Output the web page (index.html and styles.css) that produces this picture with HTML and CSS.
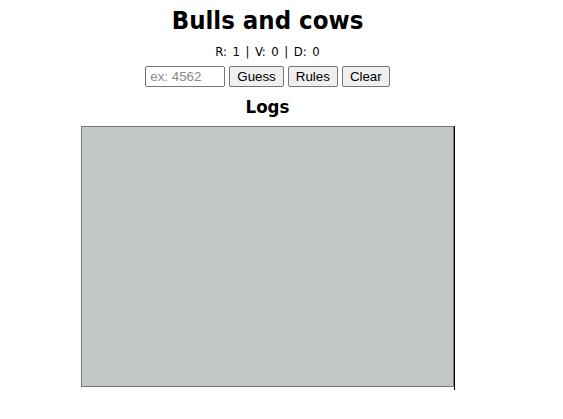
FILE: index.html
```html
<!DOCTYPE html>
<html>
<head>
<meta charset="utf-8">
<link rel="stylesheet" href="styles.css">
</head>
<body>
<main class="page">
  <h1 class="title">Bulls and cows</h1>
  <p class="stats">R: 1 | V: 0 | D: 0</p>
  <div class="controls">
    <input class="guess-input" type="text" placeholder="ex: 4562">
    <button class="btn">Guess</button>
    <button class="btn">Rules</button>
    <button class="btn">Clear</button>
  </div>
  <h2 class="logs-title">Logs</h2>
  <div class="logs-row">
    <div class="logs"></div>
    <div class="logs-edge"></div>
  </div>
</main>
</body>
</html>
```
FILE: styles.css
```css
body {
  margin: 0;
  background: #fff;
  font-family: "DejaVu Sans Condensed", "DejaVu Sans", sans-serif;
}
.page {
  width: 535px;
  display: flex;
  flex-direction: column;
  align-items: center;
}
.title {
  margin: 4px 0 0;
  font-size: 25.5px;
  line-height: 32px;
  font-weight: bold;
  color: #000;
}
.stats {
  margin: 9px 0 0;
  font-size: 13px;
  line-height: 14px;
  word-spacing: 1.8px;
}
.controls {
  margin-top: 7px;
  display: flex;
  gap: 4px;
}
.guess-input {
  width: 80px;
  height: 21px;
  box-sizing: border-box;
  border: 1px solid #767676;
  border-radius: 2px;
  padding: 1px 4px;
  font-family: "Liberation Sans", Arial, sans-serif;
  font-size: 13.33px;
}
.guess-input::placeholder { color: #8a8a8a; }
.btn {
  height: 21px;
  box-sizing: border-box;
  padding: 1px 7px;
  border: 1px solid #767676;
  border-radius: 2px;
  background: #efefef;
  font-family: "Liberation Sans", Arial, sans-serif;
  font-size: 13.33px;
  color: #000;
}
.logs-title {
  margin: 8px 0 0;
  font-size: 18.5px;
  line-height: 24px;
  font-weight: bold;
}
.logs-row {
  margin-top: 7px;
  display: flex;
  align-items: flex-start;
  margin-left: 1px;
}
.logs {
  width: 373px;
  height: 261px;
  box-sizing: border-box;
  border: 1px solid #777;
  background: #c2c7c7;
}
.logs-edge {
  width: 1px;
  height: 264px;
  background: #000;
}
```
